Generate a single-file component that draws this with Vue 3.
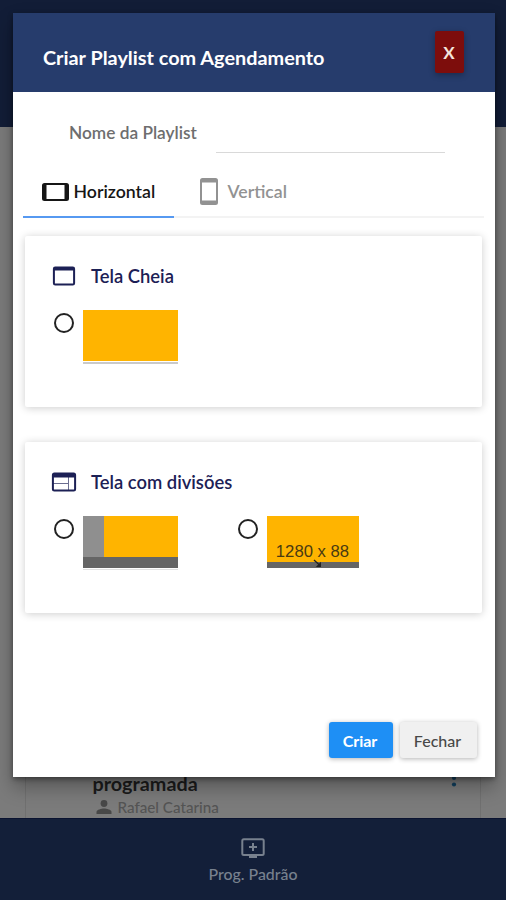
<script setup>
import { ref } from 'vue'

const orientation = ref('horizontal')
const name = ref('')
const layout = ref('')
</script>

<template>
  <div class="app">
    <div class="topbar"></div>
    <main class="content">
      <div class="program">
        <div class="program-info">
          <div class="program-title">programada</div>
          <div class="author">
            <svg width="16" height="14" viewBox="0 0 16 14"><circle cx="8" cy="3.5" r="3.4" /><path d="M.5 14v-2c0-2.200 5-3.400 7.500-3.400s7.500 1.200 7.500 3.400v2z" /></svg>
            <span>Rafael Catarina</span>
          </div>
        </div>
        <svg class="more" width="6" height="20" viewBox="0 0 6 20"><circle cx="3" cy="3" r="2.100" /><circle cx="3" cy="10" r="2.100" /><circle cx="3" cy="16.500" r="2.100" /></svg>
      </div>
    </main>
    <footer class="bottombar">
      <svg width="24" height="22" viewBox="0 0 24 22" fill="none" stroke="currentColor" stroke-width="2"><rect x="1.300" y="1.300" width="21.400" height="15.700" rx="1.500" /><path d="M8 19h8M12 5v8M8 9h8" /></svg>
      <span>Prog. Padrão</span>
    </footer>

    <div class="modal" role="dialog">
      <header class="modal-header">
        <h1><span>Criar Playlist com Agendamento</span></h1>
        <button class="close">X</button>
      </header>
      <label class="field">
        <span class="field-label">Nome da Playlist</span>
        <input v-model="name" type="text" />
      </label>
      <nav class="tabs">
        <button class="tab first" :class="{ active: orientation === 'horizontal' }" @click="orientation = 'horizontal'">
          <svg width="27" height="18" viewBox="0 0 27 18"><path fill="currentColor" fill-rule="evenodd" d="M2.500 0h22A2.500 2.500 0 0 1 27 2.500v13a2.500 2.500 0 0 1-2.500 2.500h-22A2.500 2.500 0 0 1 0 15.500v-13A2.500 2.500 0 0 1 2.500 0zM4.500 2v14h18V2z" /></svg>
          <span>Horizontal</span>
        </button>
        <button class="tab second" :class="{ active: orientation === 'vertical' }" @click="orientation = 'vertical'">
          <svg width="18" height="27" viewBox="0 0 18 27"><path fill="currentColor" fill-rule="evenodd" d="M2.500 0h13A2.500 2.500 0 0 1 18 2.500v22a2.500 2.500 0 0 1-2.500 2.500h-13A2.500 2.500 0 0 1 0 24.500v-22A2.500 2.500 0 0 1 2.500 0zM2 4.500v18h14v-18z" /></svg>
          <span>Vertical</span>
        </button>
      </nav>

      <section class="card">
        <h2>
          <svg width="26" height="20" viewBox="0 0 26 20"><rect x="2.900" y="1.400" width="20.200" height="17.200" rx="1.300" fill="none" stroke="currentColor" stroke-width="2" /><path d="M3 1h20v3.500H3z" fill="currentColor" /></svg>
          <span>Tela Cheia</span>
        </h2>
        <div class="options">
          <label class="option">
            <input v-model="layout" type="radio" value="full" />
            <span class="preview full"><span class="main"></span></span>
          </label>
        </div>
      </section>

      <section class="card">
        <h2>
          <svg width="26" height="20" viewBox="0 0 26 20"><rect x="1.900" y="1.500" width="22.200" height="17" rx="1.500" fill="none" stroke="currentColor" stroke-width="2" /><path d="M2 1h22v4.500H2z" fill="currentColor" /><path d="M17.500 5v13M2 11.500h15" fill="none" stroke="currentColor" stroke-width="1" opacity=".65" /></svg>
          <span>Tela com divisões</span>
        </h2>
        <div class="options">
          <label class="option">
            <input v-model="layout" type="radio" value="side" />
            <span class="preview split"><span class="side"></span><span class="main"></span><span class="strip"></span></span>
          </label>
          <label class="option">
            <input v-model="layout" type="radio" value="banner" />
            <span class="preview banner">
              <span class="size">1280 x 88</span>
              <span class="strip"></span>
              <svg class="arrow" width="10" height="9" viewBox="0 0 10 9"><path d="M1 1l6 5.500" stroke="#222" stroke-width="1.300" /><path d="M8 2.800V8H2.800z" fill="#222" /></svg>
            </span>
          </label>
        </div>
      </section>

      <div class="actions">
        <button class="btn primary">Criar</button>
        <button class="btn">Fechar</button>
      </div>
    </div>
  </div>
</template>

<style>
body {
  margin: 0;
  overflow: hidden;
}
</style>

<style scoped>
* {
  box-sizing: border-box;
}
.app {
  position: relative;
  display: flex;
  flex-direction: column;
  height: 900px;
  background: #7b7b7b;
  font-family: Lato, "Liberation Sans", sans-serif;
}
button {
  font-family: inherit;
  border: 0;
  padding: 0;
}
svg {
  display: block;
  flex: none;
}
.topbar {
  height: 127px;
  background: #121d37;
}
.content {
  flex: 1;
  display: flex;
  padding: 0 25px;
}
.program {
  flex: 1;
  display: flex;
  align-items: flex-end;
  justify-content: space-between;
  border: solid #707070;
  border-width: 0 1px;
  padding: 0 23px 0 66.500px;
}
.program-title {
  font-size: 19.800px;
  line-height: 26px;
  font-weight: 700;
  color: #1b1b1b;
}
.author {
  display: flex;
  align-items: center;
  gap: 6px;
  height: 22px;
  padding-left: 3px;
  font-size: 15.200px;
  font-weight: 500;
  color: #545454;
}
.author svg {
  fill: #484848;
}
.more {
  margin-bottom: 30.500px;
  fill: #123f5d;
}
.bottombar {
  height: 82px;
  padding-top: 19px;
  display: flex;
  flex-direction: column;
  align-items: center;
  gap: 4px;
  background: #131f39;
  border-top: 1px solid #0a1330;
  color: #78818e;
  font-size: 15.900px;
  line-height: 20px;
  font-weight: 500;
}
.modal {
  position: absolute;
  left: 12.500px;
  top: 13px;
  width: 482px;
  height: 764px;
  display: flex;
  flex-direction: column;
  background: #fff;
  box-shadow: 0 10px 18px rgba(0, 0, 0, .3), 0 2px 5px rgba(0, 0, 0, .4);
}
.modal-header {
  height: 78.500px;
  display: flex;
  justify-content: space-between;
  padding: 18px 31px 0 30.500px;
  background: #263c6c;
}
h1 {
  margin: 14px 0 0;
  font-size: 19.850px;
  line-height: 24px;
  font-weight: 700;
  color: #fff;
  white-space: nowrap;
}
.close {
  width: 29px;
  height: 42px;
  border-radius: 2px;
  background: #7d0d0c;
  color: #f3e4dc;
  font-size: 17px;
  font-weight: 700;
  box-shadow: 0 2px 6px rgba(0, 0, 0, .3);
}
.field {
  display: flex;
  height: 61px;
  padding: 28px 50px 0 56.500px;
  justify-content: space-between;
}
.field-label {
  font-size: 17.300px;
  line-height: 25px;
  font-weight: 600;
  color: #6e6e6e;
}
.field input {
  width: 229px;
  height: 33px;
  border: 0;
  border-bottom: 1px solid #d9d9d9;
  background: transparent;
}
.tabs {
  display: flex;
  height: 65px;
  margin: 0 11px 0 10px;
  box-shadow: inset 0 -2px #f3f3f3;
}
.tab {
  display: flex;
  align-items: center;
  background: none;
  color: #929292;
  font-size: 17.700px;
  font-weight: 600;
  padding-top: 13px;
}
.tab span {
  padding-bottom: 1px;
}
.tab.first {
  width: 151px;
  padding-left: 19.500px;
  gap: 4.500px;
}
.tab.second {
  padding-left: 26.500px;
  gap: 9.500px;
}
.tab.active {
  color: #161616;
  box-shadow: inset 0 -2px #5699f1;
}
.card {
  height: 170.500px;
  margin: 18.500px 12.500px 17px 12px;
  padding: 28px 27px 0 26px;
  border-radius: 2px;
  background: #fff;
  box-shadow: 0 1px 8px rgba(0, 0, 0, .2);
}
h2 {
  display: flex;
  align-items: center;
  gap: 14.500px;
  margin: 0;
  height: 24px;
  font-size: 18.400px;
  font-weight: 600;
  color: #1c2055;
  white-space: nowrap;
}
h2 span {
  padding-bottom: 1px;
}
.options {
  display: flex;
  gap: 60px;
  margin-top: 21.500px;
  padding-left: 3px;
}
.option {
  display: flex;
  align-items: flex-start;
  gap: 9px;
}
.option input {
  appearance: none;
  width: 20px;
  height: 20px;
  margin: 3.500px 0 0;
  border: 2px solid #222;
  border-radius: 50%;
}
.preview {
  display: grid;
  position: relative;
  width: 95px;
}
.main {
  background: #ffb400;
}
.full {
  height: 54.500px;
  padding-bottom: 3px;
  box-shadow: inset 0 -2px #cacaca;
}
.split {
  height: 54px;
  padding-bottom: 2px;
  grid-template: 41px 11px / 21px 1fr;
  box-shadow: inset 0 -1px #e2e2e2;
}
.side {
  background: #8f8f8f;
}
.strip {
  grid-column: 1 / -1;
  background: #656565;
}
.banner {
  width: 92px;
  height: 52px;
  grid-template: 46px 6px / 1fr;
  background: #ffb400;
}
.size {
  align-self: end;
  text-align: center;
  color: #4a3b12;
  font: 16.700px/20px "Liberation Sans", sans-serif;
}
.arrow {
  position: absolute;
  left: 46px;
  top: 43px;
}
.actions {
  display: flex;
  justify-content: flex-end;
  gap: 7px;
  margin-top: auto;
  padding: 0 18px 19px 0;
}
.btn {
  width: 77px;
  height: 36px;
  padding-right: 1px;
  border-radius: 3px;
  background: #f0f0f0;
  color: #484848;
  font-size: 16px;
  font-weight: 500;
  box-shadow: 0 1px 5px rgba(0, 0, 0, .3);
}
.btn.primary {
  width: 64px;
  background: #1e8ff5;
  color: #fff;
  font-weight: 700;
}
</style>
